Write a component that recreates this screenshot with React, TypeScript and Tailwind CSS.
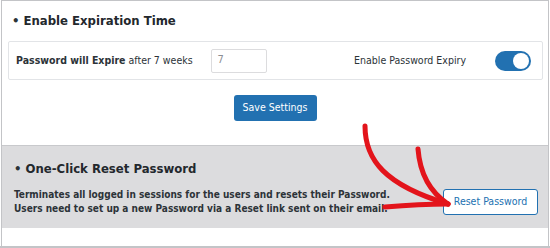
import React from 'react';

const font = { fontFamily: '"DejaVu Sans Condensed", "Liberation Sans", Arial, sans-serif' };

const Toggle: React.FC<{ on: boolean }> = ({ on }) => (
  <div className={`w-[36px] h-[20px] rounded-full flex items-center px-[2px] ${on ? 'bg-[#2271b1] justify-end' : 'bg-gray-300 justify-start'}`}>
    <div className="w-[16px] h-[16px] rounded-full bg-white" />
  </div>
);

const RedArrow: React.FC = () => (
  <svg className="absolute left-0 top-0 pointer-events-none" width="550" height="248" viewBox="0 0 550 248">
    <g fill="none" stroke="#e3141b" strokeWidth="5" strokeLinecap="round" strokeLinejoin="round">
      <path d="M365,126 C365,160 385,185 448,204" />
      <path d="M418,149 C420,175 430,192 448,204" />
      <path d="M385,207 Q420,204 448,204" />
    </g>
  </svg>
);

export default function App() {
  return (
    <div className="relative w-[550px] h-[248px] bg-white overflow-hidden text-[#2c3338]" style={font}>
      <div className="ml-px w-[548px] h-[246px] border-x border-t border-[#c3c4c7] flex flex-col">
        <div className="pt-[10px] pl-[10px] flex items-center gap-[4px] h-[30px]">
          <span className="text-[13px] font-bold">•</span>
          <h3 className="text-[13px] font-bold text-[#23282d]">Enable Expiration Time</h3>
        </div>

        <div className="mt-[10px] ml-[6px] mr-[5px] h-[39px] border border-[#e2e4e7] rounded-[2px] flex items-center pl-[7px] pr-[11px]">
          <span className="text-[10.5px]">
            <b>Password will Expire</b> after 7 weeks
          </span>
          <div className="ml-[18px] w-[56px] h-[24px] border border-[#dcdcde] rounded-[2px] flex items-center pl-[6px] text-[11px] text-[#8c8f94]">
            7
          </div>
          <span className="ml-auto text-[10.5px]">Enable Password Expiry</span>
          <div className="ml-[29px]">
            <Toggle on />
          </div>
        </div>

        <div className="mt-[15px] flex justify-center">
          <button className="w-[83px] h-[26px] rounded-[3px] bg-[#2271b1] text-white text-[10.5px]">Save Settings</button>
        </div>

        <div className="mt-[24px] h-[83px] bg-[#dcdcde] border-t border-[#c8c9cc] pl-[12px] pr-[10px]">
          <div className="pt-[13px] flex items-center gap-[4px] h-[33px]">
            <span className="text-[13px] font-bold">•</span>
            <h3 className="text-[13px] font-bold text-[#23282d]">One-Click Reset Password</h3>
          </div>
          <div className="mt-[9px] flex items-center justify-between">
            <p className="text-[10px] font-bold leading-[14px]">
              Terminates all logged in sessions for the users and resets their Password.
              <br />
              Users need to set up a new Password via a Reset link sent on their email.
            </p>
            <button className="w-[95px] h-[26px] rounded-[3px] bg-white border border-[#2271b1] text-[#2271b1] text-[10.5px]">
              Reset Password
            </button>
          </div>
        </div>
      </div>
      <div className="h-[2px] bg-[#c3c4c7]" />
      <RedArrow />
    </div>
  );
}
